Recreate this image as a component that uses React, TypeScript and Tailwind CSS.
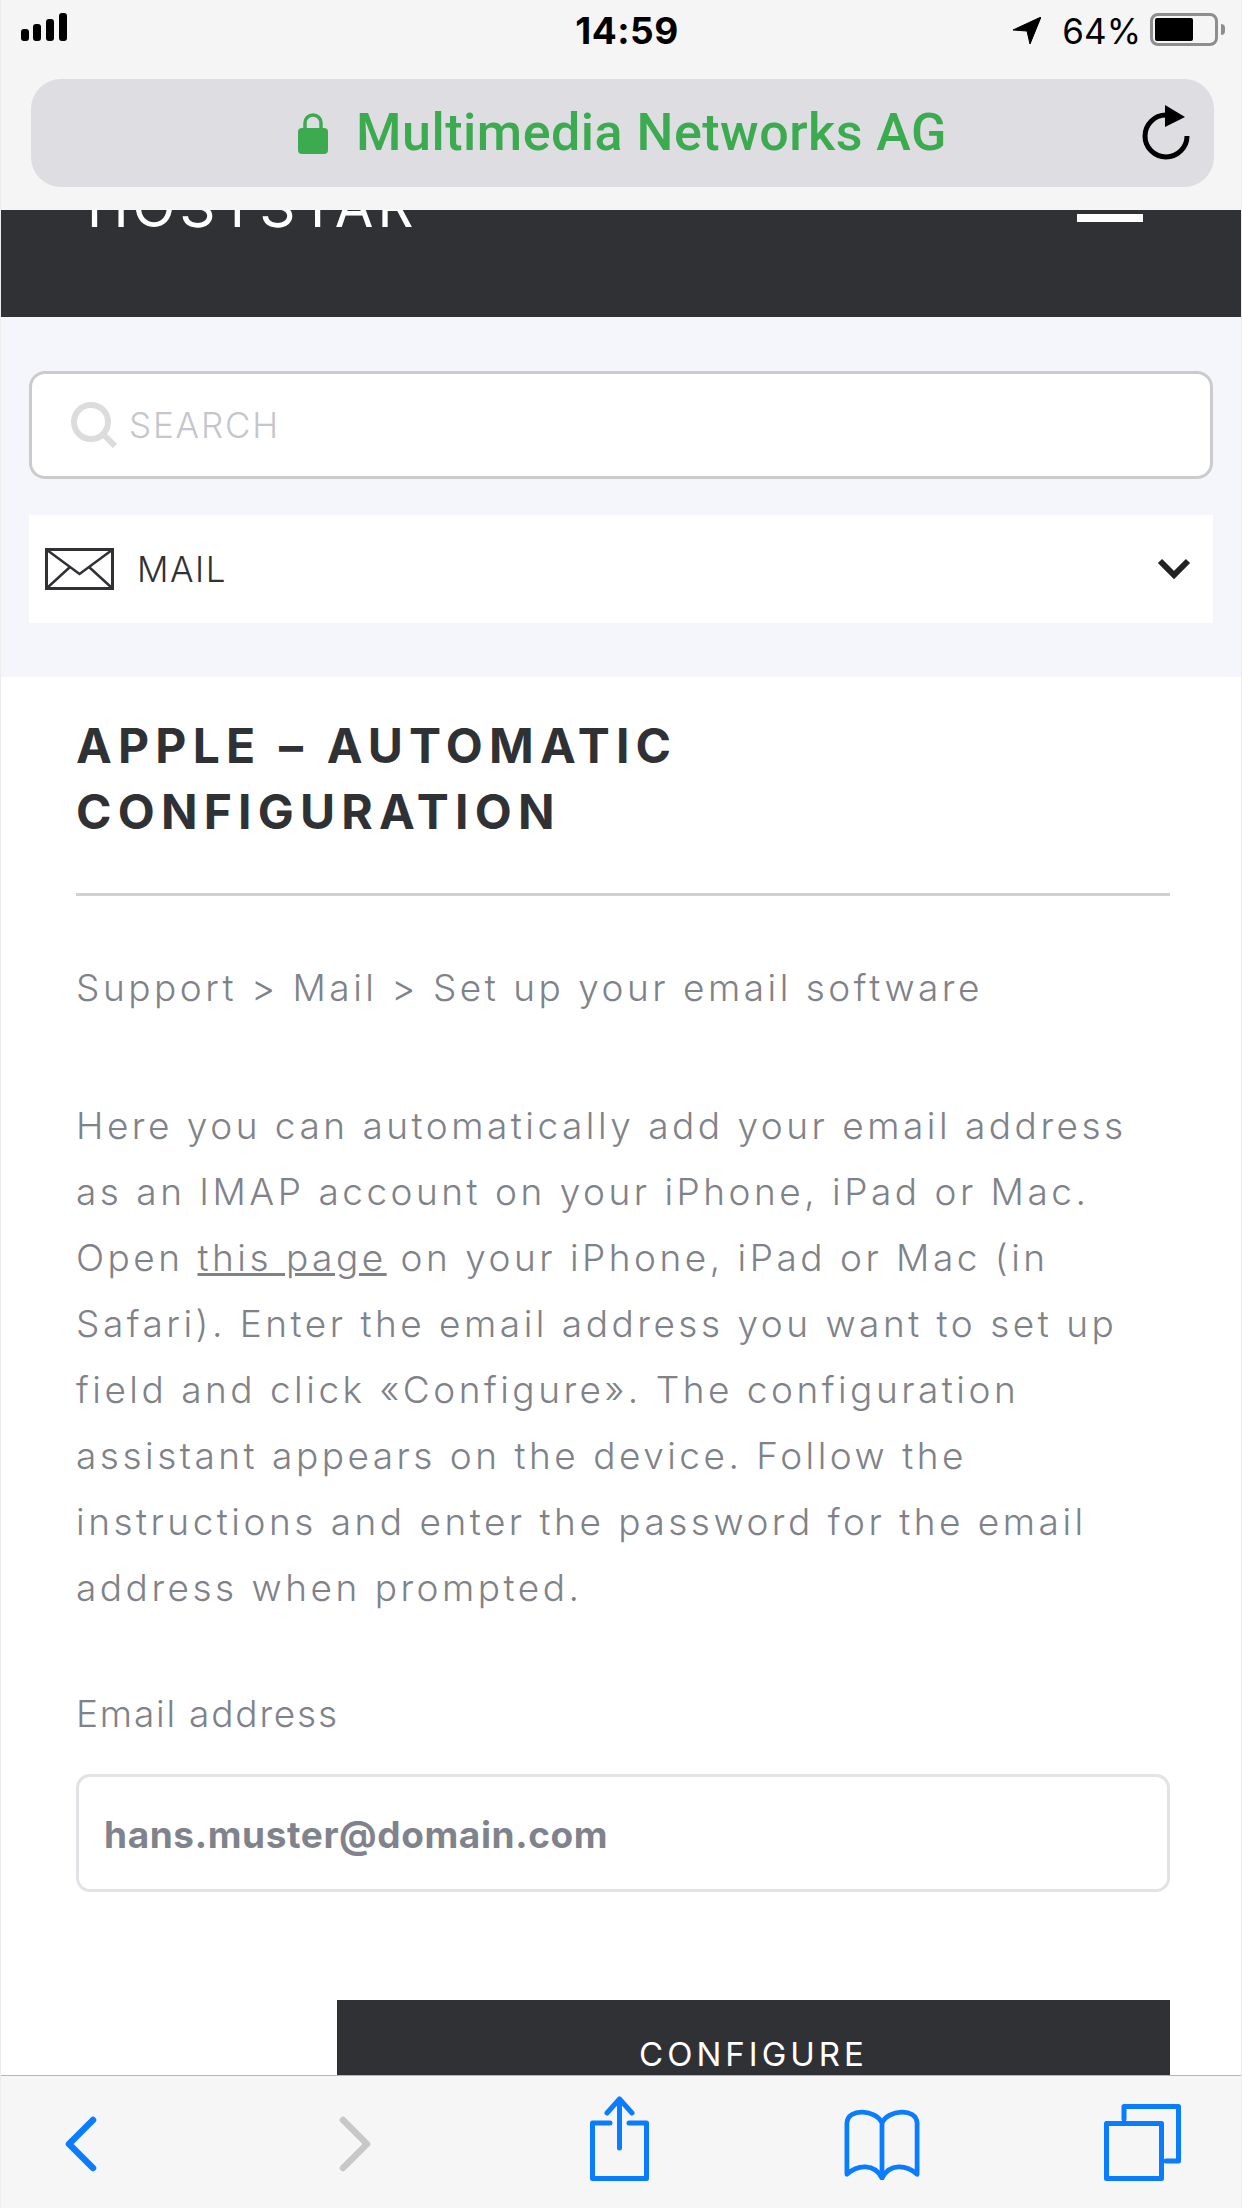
const sans = { fontFamily: 'Inter, sans-serif' }

function SignalIcon() {
  return (
    <svg width="46" height="28" viewBox="0 0 46 28" className="block">
      <rect x="0" y="16" width="8" height="12" rx="3" fill="#000" />
      <rect x="12" y="11" width="8" height="17" rx="3" fill="#000" />
      <rect x="25" y="6" width="8" height="22" rx="3" fill="#000" />
      <rect x="38" y="0" width="8" height="28" rx="3" fill="#000" />
    </svg>
  )
}

function StatusBar() {
  return (
    <div className="grid grid-cols-3 h-[62px] items-start" style={sans}>
      <div className="pl-[20px] pt-[13px]">
        <SignalIcon />
      </div>
      <div className="text-center pl-[12px] text-[37px] leading-[62px] font-bold text-black tracking-[0.5px]">14:59</div>
      <div className="flex items-start justify-end pr-[16px]">
        <svg width="28" height="27" viewBox="0 0 28 27" className="mt-[17px] mr-[21px]">
          <path d="M0 13 L28 0 L17 27 L14 14 Z" fill="#000" stroke="#000" strokeLinejoin="round" />
        </svg>
        <span className="text-[35px] leading-[62px] text-black">64%</span>
        <div className="ml-[9px] mt-[13px] w-[68px] h-[33px] rounded-[8px] border-[3px] border-[#8e8e8e] p-[2px]">
          <div className="w-[38px] h-[23px] bg-black rounded-[2px]" />
        </div>
        <div className="ml-[3px] mt-[24px] w-[4px] h-[11px] rounded-r-full bg-[#8e8e8e]" />
      </div>
    </div>
  )
}

function UrlBar() {
  return (
    <div className="mt-[17px] ml-[30px] mr-[27px] h-[108px] rounded-[30px] bg-[#dddde2] flex items-center relative">
      <div className="flex-1 flex items-center justify-center gap-[28px]">
        <svg width="30" height="41" viewBox="0 0 30 41">
          <path d="M7 20 V10 a8 8 0 0 1 16 0 V20" fill="none" stroke="#3cab50" strokeWidth="3.5" />
          <rect x="0" y="15" width="30" height="26" rx="4" fill="#3cab50" />
        </svg>
        <span className="text-[52px] leading-none font-medium text-[#3cab50] tracking-[0.5px]" style={{ fontFamily: 'Roboto, sans-serif' }}>
          Multimedia Networks AG
        </span>
      </div>
      <svg width="48" height="55" viewBox="0 0 48 55" className="absolute right-[24px] top-[26px]">
        <path d="M24 10 A21 21 0 1 0 45 31" fill="none" stroke="#000" strokeWidth="5" />
        <path d="M23 0 L43 12 L23 22 Z" fill="#000" />
      </svg>
    </div>
  )
}

function SiteHeader() {
  return (
    <div className="h-[107px] bg-[#303135] overflow-hidden flex items-start justify-between pl-[86px] pr-[98px]">
      <span className="-mt-[31px] text-[56px] leading-[56px] font-normal text-white tracking-[4px]" style={sans}>
        HOSTSTAR
      </span>
      <div className="mt-[4px] w-[66px] h-[8px] bg-white" />
    </div>
  )
}

function SearchArea() {
  return (
    <div className="bg-[#f4f6fb] h-[360px] pt-[54px] pl-[28px] pr-[28px]">
      <div className="h-[108px] bg-white border-[3px] border-[#cbcbcb] rounded-[16px] flex items-center pl-[39px]">
        <svg width="46" height="46" viewBox="0 0 46 46">
          <circle cx="20" cy="20" r="17" fill="none" stroke="#dcdcdc" strokeWidth="6" />
          <path d="M32 32 L44 44" stroke="#dcdcdc" strokeWidth="6" />
        </svg>
        <span className="ml-[12px] text-[35px] font-light text-[#c5c6cb] tracking-[1.8px]" style={sans}>
          SEARCH
        </span>
      </div>
      <div className="mt-[36px] h-[108px] bg-white flex items-center pl-[16px] pr-[22px]">
        <svg width="69" height="42" viewBox="0 0 69 42">
          <rect x="1.5" y="1.5" width="66" height="39" fill="none" stroke="#303135" strokeWidth="3" />
          <path d="M2 2 L34.5 26 L67 2 M2 40 L25 19 M67 40 L44 19" fill="none" stroke="#303135" strokeWidth="2.5" />
        </svg>
        <span className="ml-[23px] text-[35px] font-light text-[#303135] tracking-[1.5px]" style={sans}>
          MAIL
        </span>
        <svg width="34" height="22" viewBox="0 0 34 22" className="ml-auto">
          <path d="M3 3 L17 17 L31 3" fill="none" stroke="#222" strokeWidth="6" />
        </svg>
      </div>
    </div>
  )
}

function Article() {
  return (
    <div className="flex-1 bg-white overflow-hidden pl-[75px] pr-[71px] pt-[36px]" style={sans}>
      <h1 className="text-[48px] leading-[66px] font-bold text-[#303135] tracking-[6.2px]">
        APPLE – AUTOMATIC
        <br />
        CONFIGURATION
      </h1>
      <div className="mt-[48px] h-[3px] bg-[#d0d1d4]" />
      <p className="mt-[59px] text-[37px] leading-[66px] font-light text-[#808289] tracking-[3.5px] whitespace-nowrap">
        Support &gt; Mail &gt; Set up your email software
      </p>
      <p className="mt-[72px] text-[37px] leading-[66px] font-light text-[#808289] tracking-[3.5px] whitespace-nowrap">
        Here you can automatically add your email address
        <br />
        as an IMAP account on your iPhone, iPad or Mac.
        <br />
        Open <span className="underline">this page</span> on your iPhone, iPad or Mac (in
        <br />
        Safari). Enter the email address you want to set up
        <br />
        field and click «Configure». The configuration
        <br />
        assistant appears on the device. Follow the
        <br />
        instructions and enter the password for the email
        <br />
        address when prompted.
      </p>
      <p className="mt-[71px] text-[37px] leading-[44px] font-light text-[#808289] tracking-[1.8px]">Email address</p>
      <div className="mt-[38px] h-[118px] border-[3px] border-[#e2e3e7] rounded-[14px] flex items-center pl-[25px] pt-[3px]">
        <span className="text-[37px] font-bold text-[#80838b] tracking-[0.6px]">hans.muster@domain.com</span>
      </div>
      <div className="mt-[108px] ml-[261px] h-[120px] bg-[#303135] flex justify-center pt-[32px]">
        <span className="text-[33px] leading-[44px] font-normal text-white tracking-[4px]">CONFIGURE</span>
      </div>
    </div>
  )
}

function ToolBar() {
  const blue = '#0a7cff'
  return (
    <div className="h-[133px] shrink-0 bg-[#f6f6f6] border-t border-[#b5b5b5] flex items-start">
      <svg width="36" height="60" viewBox="0 0 36 60" className="ml-[61px] mt-[39px]">
        <path d="M31 5 L7 29 L31 53" fill="none" stroke={blue} strokeWidth="6.5" strokeLinecap="round" strokeLinejoin="round" />
      </svg>
      <svg width="36" height="60" viewBox="0 0 36 60" className="ml-[240px] mt-[39px]">
        <path d="M5 5 L29 29 L5 53" fill="none" stroke="#c8c8c8" strokeWidth="6.5" strokeLinecap="round" strokeLinejoin="round" />
      </svg>
      <svg width="59" height="86" viewBox="0 0 59 86" className="ml-[216px] mt-[20px]">
        <path d="M20 27 H2.5 V82.5 H56.5 V27 H39" fill="none" stroke={blue} strokeWidth="5" strokeLinecap="round" strokeLinejoin="round" />
        <path d="M29.5 3 V52 M17 17 L29.5 3 L42 17" fill="none" stroke={blue} strokeWidth="5" strokeLinecap="round" strokeLinejoin="round" />
      </svg>
      <svg width="76" height="74" viewBox="0 0 80 78" className="ml-[195px] mt-[30px]">
        <path d="M40 16 C34 2 4 -1 3 16 V70 C14 60 32 58 40 74 C48 58 66 60 77 70 V16 C76 -1 46 2 40 16 V74" transform="translate(0 2)" fill="none" stroke={blue} strokeWidth="5" strokeLinecap="round" strokeLinejoin="round" />
      </svg>
      <svg width="77" height="77" viewBox="0 0 77 77" className="ml-[184px] mt-[28px]">
        <rect x="2.5" y="19.5" width="55" height="55" fill="none" stroke={blue} strokeWidth="5" strokeLinejoin="round" />
        <path d="M20 15 V2.5 H74.5 V57 H62" fill="none" stroke={blue} strokeWidth="5" strokeLinecap="round" strokeLinejoin="round" />
      </svg>
    </div>
  )
}

export default function App() {
  return (
    <div className="w-[1242px] h-[2208px] flex flex-col overflow-hidden bg-white border-x border-[#ececec]">
      <div className="h-[210px] shrink-0 bg-[#f5f5f5]">
        <StatusBar />
        <UrlBar />
      </div>
      <SiteHeader />
      <SearchArea />
      <Article />
      <ToolBar />
    </div>
  )
}
